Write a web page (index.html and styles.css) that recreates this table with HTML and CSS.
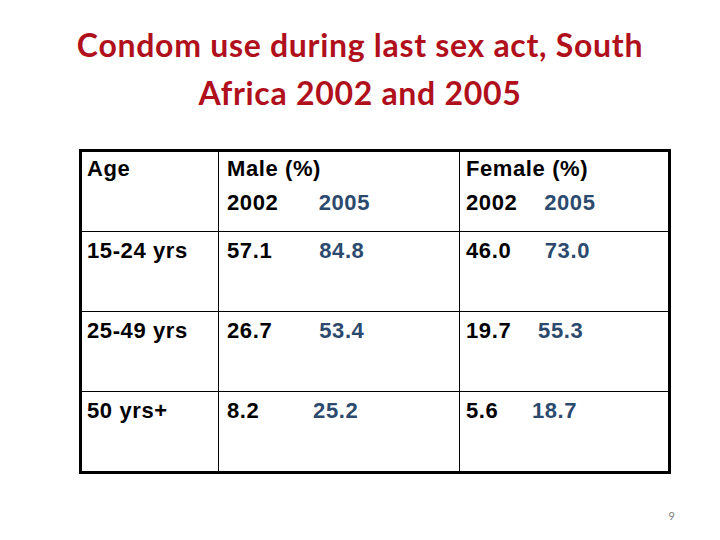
FILE: index.html
```html
<!DOCTYPE html>
<html>
<head>
<meta charset="utf-8">
<link rel="stylesheet" href="styles.css">
</head>
<body>
<div class="slide">
  <h1 class="title">Condom use during last sex act, South<br>Africa 2002 and 2005</h1>
  <table class="data">
    <tr class="head">
      <td class="c1">Age</td>
      <td class="c2"><div>Male (%)</div><div>2002      <span class="late">2005</span></div></td>
      <td class="c3"><div>Female (%)</div><div>2002    <span class="late">2005</span></div></td>
    </tr>
    <tr>
      <td class="c1">15-24 yrs</td>
      <td class="c2">57.1       <span class="late">84.8</span></td>
      <td class="c3">46.0     <span class="late">73.0</span></td>
    </tr>
    <tr>
      <td class="c1">25-49 yrs</td>
      <td class="c2">26.7       <span class="late">53.4</span></td>
      <td class="c3">19.7    <span class="late">55.3</span></td>
    </tr>
    <tr class="last">
      <td class="c1">50 yrs+</td>
      <td class="c2">8.2        <span class="late">25.2</span></td>
      <td class="c3">5.6     <span class="late">18.7</span></td>
    </tr>
  </table>
  <div class="footer"><span class="pagenum">9</span></div>
</div>
</body>
</html>
```
FILE: styles.css
```css
html, body {
  margin: 0;
  padding: 0;
  background: #ffffff;
}

.slide {
  width: 720px;
  height: 540px;
  display: flex;
  flex-direction: column;
  overflow: hidden;
}

.title {
  margin: 21px 0 0 0;
  font-family: Lato, "Open Sans", sans-serif;
  font-weight: 700;
  font-size: 32px;
  letter-spacing: 0.7px;
  line-height: 48px;
  color: #b0101c;
  text-align: center;
}

.data {
  margin: 32px 0 0 79px;
  width: 592px;
  border-collapse: collapse;
  border: 3px solid #000;
  font-family: "Liberation Sans", Arial, sans-serif;
  font-weight: 700;
  font-size: 22px;
  letter-spacing: 0.6px;
  line-height: 34px;
  color: #000;
}

.data td {
  border: 1px solid #000;
  vertical-align: top;
  padding: 0 0 0 8px;
  height: 80px;
  box-sizing: border-box;
  white-space: pre;
}

.data tr.head td {
  height: 81px;
}

.data tr:not(.head) td {
  padding-top: 2px;
}

.data tr.last td {
  height: 81px;
}

.data .c1 {
  width: 138px;
  padding-left: 5px;
}

.data .c2 {
  width: 241px;
}

.data .c3 {
  padding-left: 6px;
}

.data .late {
  color: #2c4a6e;
}

.footer {
  margin-top: auto;
  display: flex;
  justify-content: flex-end;
  padding: 0 45px 18px 0;
}

.pagenum {
  font-family: Lato, "Open Sans", sans-serif;
  font-size: 11px;
  color: #808080;
}
```
